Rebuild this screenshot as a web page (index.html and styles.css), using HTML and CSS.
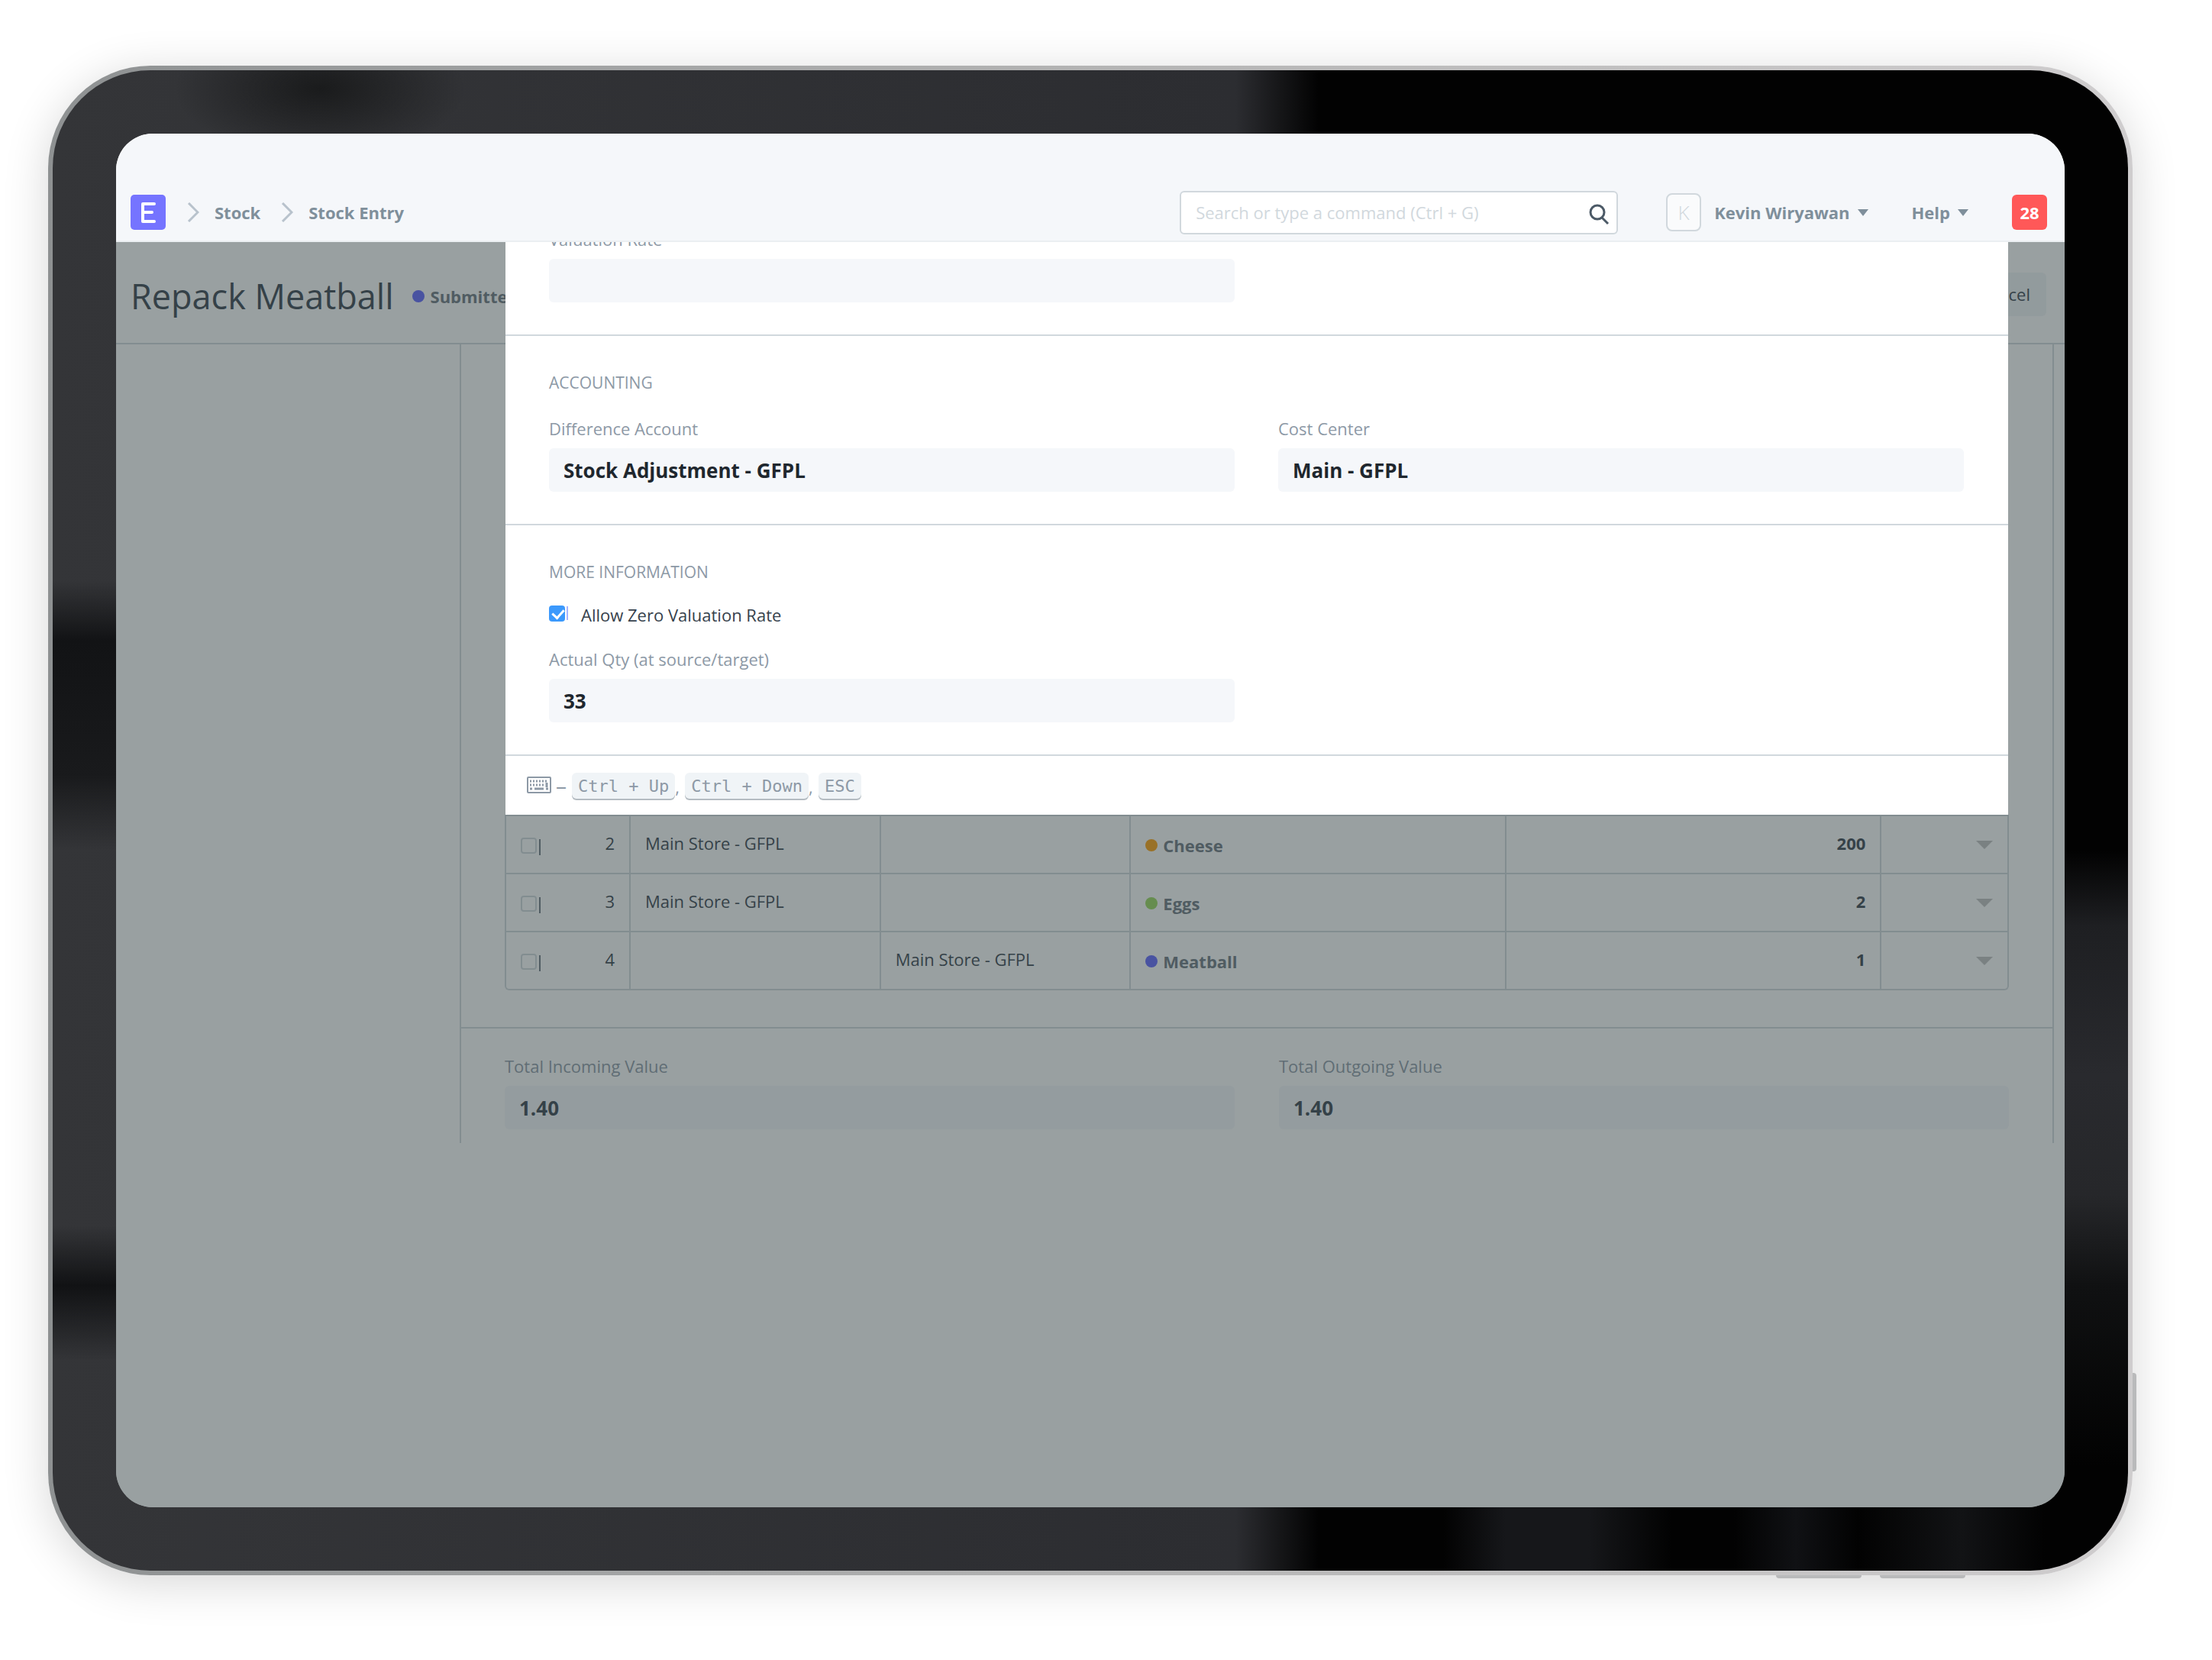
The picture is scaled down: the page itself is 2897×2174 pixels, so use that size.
FILE: index.html
```html
<!DOCTYPE html>
<html lang="en">
<head>
    <meta charset="utf-8">
    <title>Repack Meatball</title>
    <link rel="stylesheet" href="styles.css">
</head>
<body>
    <div class="device">
        <span class="side-button power"></span>
        <span class="side-button volume-up"></span>
        <span class="side-button volume-down"></span>
        <div class="bezel">
            <div class="screen">
                <header class="navbar">
                    <nav class="breadcrumbs">
                        <a href="#" class="logo" aria-label="Home">
                            <svg width="46" height="46" viewBox="0 0 46 46">
                                <rect width="46" height="46" rx="5" fill="#7574ff"/>
                                <path d="M31 12H16v23h15M16 23h12" fill="none" stroke="#fff" stroke-width="4" stroke-linecap="round" stroke-linejoin="round"/>
                            </svg>
                        </a>
                        <svg class="chevron" width="16" height="26" viewBox="0 0 16 26"><path d="M2 1l12 12L2 25"/></svg>
                        <a href="#">Stock</a>
                        <svg class="chevron" width="16" height="26" viewBox="0 0 16 26"><path d="M2 1l12 12L2 25"/></svg>
                        <a href="#">Stock Entry</a>
                    </nav>
                    <div class="search">
                        <input type="text" placeholder="Search or type a command (Ctrl + G)" aria-label="Search">
                        <svg width="28" height="28" viewBox="0 0 28 28"><circle cx="11" cy="11" r="9"/><path d="M17 18l8 8"/></svg>
                    </div>
                    <button class="nav-button user"><span class="avatar">K</span>Kevin Wiryawan<span class="caret"></span></button>
                    <button class="nav-button help">Help<span class="caret"></span></button>
                    <button class="badge">28</button>
                </header>

                <main class="page">
                    <div class="page-head">
                        <h1>Repack Meatball</h1>
                        <span class="indicator blue">Submitted</span>
                        <button class="cancel">Cancel</button>
                    </div>

                    <div class="layout">
                        <aside></aside>
                        <div class="form">
                            <section class="items">
                                <div class="grid-form">
                                    <div class="form-section first">
                                        <div class="field">
                                            <label for="valuation">Valuation Rate</label>
                                            <input type="text" id="valuation" readonly>
                                        </div>
                                    </div>
                                    <div class="form-section">
                                        <h2>ACCOUNTING</h2>
                                        <div class="field">
                                            <label for="account">Difference Account</label>
                                            <input type="text" id="account" value="Stock Adjustment - GFPL" readonly>
                                        </div>
                                        <div class="field">
                                            <label for="cost">Cost Center</label>
                                            <input type="text" id="cost" value="Main - GFPL" readonly>
                                        </div>
                                    </div>
                                    <div class="form-section">
                                        <h2>MORE INFORMATION</h2>
                                        <label class="check-row"><input type="checkbox" class="check" checked><span class="bar"></span>Allow Zero Valuation Rate</label>
                                        <div class="field">
                                            <label for="qty">Actual Qty (at source/target)</label>
                                            <input type="text" id="qty" value="33" readonly>
                                        </div>
                                    </div>
                                    <div class="shortcuts">
                                        <svg width="32" height="22" viewBox="0 0 32 22">
                                            <rect x="1" y="1" width="30" height="20" rx="1" fill="none" stroke="#8d99a6" stroke-width="2"/>
                                            <path d="M4 6h24M4 11h20" stroke="#8d99a6" stroke-width="3" stroke-dasharray="2 2"/>
                                            <path d="M4 16h3M10 16h12M25 16h3M26 8v6" stroke="#8d99a6" stroke-width="3"/>
                                        </svg>
                                        <span class="dash">–</span>
                                        <kbd>Ctrl + Up</kbd><span class="comma">,</span>
                                        <kbd>Ctrl + Down</kbd><span class="comma">,</span>
                                        <kbd>ESC</kbd>
                                    </div>
                                </div>
                                <table>
                                    <colgroup>
                                        <col class="col-index"><col class="col-store"><col class="col-store">
                                        <col class="col-item"><col class="col-item"><col>
                                    </colgroup>
                                    <tr>
                                        <td><div class="index"><input type="checkbox" class="check" aria-label="Row 2"><span class="bar"></span>2</div></td>
                                        <td>Main Store - GFPL</td>
                                        <td></td>
                                        <td class="item"><span class="indicator orange">Cheese</span></td>
                                        <td class="qty">200</td>
                                        <td class="open"><span class="caret"></span></td>
                                    </tr>
                                    <tr>
                                        <td><div class="index"><input type="checkbox" class="check" aria-label="Row 3"><span class="bar"></span>3</div></td>
                                        <td>Main Store - GFPL</td>
                                        <td></td>
                                        <td class="item"><span class="indicator green">Eggs</span></td>
                                        <td class="qty">2</td>
                                        <td class="open"><span class="caret"></span></td>
                                    </tr>
                                    <tr>
                                        <td><div class="index"><input type="checkbox" class="check" aria-label="Row 4"><span class="bar"></span>4</div></td>
                                        <td></td>
                                        <td>Main Store - GFPL</td>
                                        <td class="item"><span class="indicator blue">Meatball</span></td>
                                        <td class="qty">1</td>
                                        <td class="open"><span class="caret"></span></td>
                                    </tr>
                                </table>
                            </section>
                            <section class="totals">
                                <div class="field">
                                    <label for="incoming">Total Incoming Value</label>
                                    <input type="text" id="incoming" value="1.40" readonly>
                                </div>
                                <div class="field">
                                    <label for="outgoing">Total Outgoing Value</label>
                                    <input type="text" id="outgoing" value="1.40" readonly>
                                </div>
                            </section>
                        </div>
                    </div>
                    <div class="freeze"></div>
                </main>
            </div>
        </div>
    </div>
</body>
</html>
```
FILE: styles.css
```css
* {
    box-sizing: border-box;
}
body {
    margin: 0;
    min-height: 100vh;
    padding: 86px 104px 111px 63px;
    display: flex;
    background: white;
    color: #36414c;
    font-family: "Open Sans", "Noto Sans", sans-serif;
    font-size: 22px;
    line-height: 32px;
}
h1, h2 {
    margin: 0;
    font-weight: normal;
}
a {
    color: inherit;
    text-decoration: none;
}
button, input {
    font: inherit;
    color: inherit;
    border: none;
    margin: 0;
}

/* tablet */
.device {
    flex: 1;
    display: flex;
    position: relative;
    padding: 6px;
    border-radius: 134px;
    background: linear-gradient(90deg, #8e9192, #b4b4b4 50%, #cfcdce);
    box-shadow: 0 10px 60px rgba(0, 0, 0, 0.16);
}
.bezel {
    flex: 1;
    display: flex;
    padding: 83px;
    border-radius: 128px;
    background:
        radial-gradient(ellipse 190px 90px at 350px 24px, #1a1b1c, transparent),
        linear-gradient(transparent 34%, #121315 38%, #191a1c 47%, transparent 52%, transparent 77%, #111214 81%, transparent 86%) left / 84px 100% no-repeat,
        linear-gradient(transparent 52%, #1e1f22 57%, #292a2e 67%, #26272a 75%, #101112 81%, transparent 93%) right / 84px 100% no-repeat,
        linear-gradient(90deg, transparent 67%, #16171a 70%, #16171a 74%, transparent 78%, transparent 81%, #101114 84%, transparent 87%, #121315 92%, transparent 96%) bottom / 100% 84px no-repeat,
        linear-gradient(90deg, #343538, #2c2d31 57%, #020202 61%);
}
.side-button {
    position: absolute;
    background: #b9babb;
}
.power {
    right: -5px;
    bottom: 136px;
    width: 5px;
    height: 129px;
    border-radius: 0 4px 4px 0;
}
.volume-up, .volume-down {
    bottom: -4px;
    width: 112px;
    height: 4px;
    border-radius: 0 0 4px 4px;
}
.volume-up {
    right: 355px;
}
.volume-down {
    right: 219px;
}
.screen {
    flex: 1;
    display: flex;
    flex-direction: column;
    border-radius: 48px;
    overflow: hidden;
    background: white;
}

/* navbar */
.navbar {
    height: 142px;
    padding: 76px 23px 10px 19px;
    border-bottom: 2px solid #ebeff2;
    background: #f5f7fa;
    color: #7f8f9b;
    font-weight: 700;
    display: flex;
    align-items: center;
}
.breadcrumbs {
    flex: 1;
    display: flex;
    align-items: center;
    gap: 20px;
}
.logo {
    display: flex;
    margin-right: 8px;
}
.chevron {
    fill: none;
    stroke: #b8c2cc;
    stroke-width: 3;
}
a + .chevron:not(:nth-child(2)) {
    margin-left: 7px;
}
.search {
    position: relative;
    width: 574px;
    margin-right: 63px;
}
.search input {
    width: 100%;
    height: 57px;
    padding: 0 60px 0 19px;
    border: 2px solid #d1d8dd;
    border-radius: 6px;
    background: white;
    font-weight: normal;
}
.search input::placeholder {
    color: #d1d8dd;
    opacity: 1;
}
.search svg {
    position: absolute;
    right: 10px;
    top: 17px;
    fill: none;
    stroke: #4c5a67;
    stroke-width: 3;
}
.nav-button {
    display: flex;
    align-items: center;
    padding: 0;
    background: none;
    font-weight: 700;
}
.avatar {
    width: 46px;
    height: 50px;
    margin-right: 17px;
    border: 2px solid #d1d8dd;
    border-radius: 8px;
    background: #fafbfc;
    color: #d1d8dd;
    font-size: 26px;
    font-weight: 300;
    line-height: 46px;
}
.caret {
    margin-left: 10px;
    border: 7px solid transparent;
    border-top: 9px solid;
    border-bottom: 0;
}
.help {
    margin: 0 57px;
}
.badge {
    width: 46px;
    height: 46px;
    padding: 0;
    border-radius: 6px;
    background: #ff5858;
    color: white;
    font-weight: 700;
}

/* page */
.page {
    flex: 1;
    position: relative;
    overflow: hidden;
}
.freeze {
    position: absolute;
    inset: 0;
    background: #334143;
    opacity: 0.5;
}
.page-head {
    height: 134px;
    padding: 4px 24px 0 19px;
    border-bottom: 2px solid #d1d8dd;
    display: flex;
    align-items: center;
}
.page-head h1, .page-head .indicator {
    padding-top: 6px;
}
h1 {
    margin-right: 24px;
    font-size: 45px;
    line-height: 64px;
}
.indicator {
    display: flex;
    align-items: center;
    gap: 8px;
    color: #6c7680;
    font-weight: 700;
}
.indicator::before {
    content: "";
    width: 16px;
    height: 16px;
    border-radius: 50%;
}
.blue::before {
    background: #5e64ff;
}
.orange::before {
    background: #ffa00a;
}
.green::before {
    background: #98d85b;
}
.cancel {
    margin-left: auto;
    height: 57px;
    padding: 0 21px;
    border-radius: 6px;
    background: #f0f4f7;
}
.layout {
    display: flex;
}
aside {
    width: 450px;
}
.form {
    flex: 1;
    margin-right: 14px;
    border: 2px solid #d1d8dd;
    border-width: 0 2px;
}
.items {
    padding: 0 57px 48px;
    border-bottom: 2px solid #d1d8dd;
}
.totals {
    display: grid;
    grid-template-columns: 1fr 1fr;
    gap: 58px;
    padding: 33px 57px 18px;
}
.field {
    display: flex;
    flex-direction: column;
    gap: 10px;
}
.field label, h2 {
    color: #8d99a6;
    font-size: 22px;
}
.field input {
    width: 100%;
    height: 57px;
    padding: 0 19px;
    border-radius: 6px;
    background: #f5f7fa;
    font-size: 26px;
    font-weight: 700;
}

/* open row, drawn over the frozen page */
.grid-form {
    position: relative;
    z-index: 1;
    margin: -154px 1px 0;
    background: white;
}
.form-section {
    display: grid;
    grid-template-columns: 1fr 1fr;
    column-gap: 57px;
    padding: 45px 58px 42px 57px;
    border-bottom: 2px solid #d1d8dd;
}
.form-section.first {
    padding-top: 0;
}
.grid-form .field input {
    color: #1f272e;
}
h2, .check-row {
    grid-column: 1 / -1;
}
.form-section h2 {
    margin-bottom: 28px;
    font-size: 21px;
}
.check-row {
    display: flex;
    align-items: center;
    height: 24px;
    margin-bottom: 30px;
}
.check {
    appearance: none;
    width: 21px;
    height: 21px;
    border: 2px solid #d1d8dd;
    border-radius: 4px;
}
.check:checked {
    margin-bottom: 4px;
    border: none;
    background: #3b99fc;
}
.check:checked::before {
    content: "";
    display: block;
    width: 7px;
    height: 12px;
    margin: 2px 0 0 7px;
    border: solid white;
    border-width: 0 3px 3px 0;
    transform: rotate(42deg);
}
.bar {
    width: 2px;
    height: 21px;
    margin-left: 2px;
    background: #6c7680;
}
.check-row .bar {
    height: 18px;
    margin: 0 17px 4px 2px;
    background: #a5b4ff;
}
.shortcuts {
    display: flex;
    align-items: center;
    height: 77px;
    padding: 3px 0 0 28px;
    color: #8d99a6;
}
.shortcuts svg {
    margin-bottom: 4px;
}
.dash {
    margin: 0 7px 4px 6px;
    font-size: 28px;
}
kbd {
    height: 36px;
    padding: 0 8px;
    border-radius: 6px;
    background: #f0f4f7;
    box-shadow: inset 0 -2px #b4bcc2;
    font: 22px/36px "DejaVu Sans Mono", monospace;
}
.comma {
    width: 13px;
}
table {
    width: 100%;
    table-layout: fixed;
    border: 2px solid #d1d8dd;
    border-top: 0;
    border-radius: 0 0 6px 6px;
    border-spacing: 0;
}
.col-index {
    width: 161px;
}
.col-store {
    width: calc(100% / 6);
}
.col-item {
    width: 25%;
}
td {
    height: 76px;
    padding: 0 19px 4px;
    border-top: 2px solid #d1d8dd;
    border-left: 2px solid #d1d8dd;
}
td:first-child {
    border-left: 0;
}
.index {
    display: flex;
    align-items: center;
}
.index .check {
    margin-top: 6px;
}
.index .bar {
    margin: 10px auto 0 3px;
}
.item {
    padding-top: 5px;
}
.item .indicator {
    gap: 7px;
}
.qty {
    text-align: right;
    font-weight: 700;
}
.open .caret {
    float: right;
    margin-top: 4px;
    border-width: 11px 11px 0;
    color: #c0c0c0;
}
```
